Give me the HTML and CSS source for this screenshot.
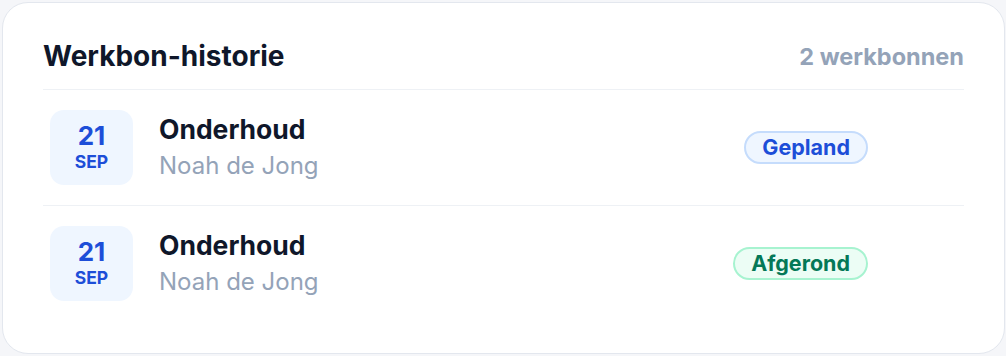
FILE: index.html
```html
<!DOCTYPE html>
<html lang="nl">
<head>
<meta charset="utf-8">
<link rel="stylesheet" href="styles.css">
</head>
<body>
<section class="card">
  <header class="card-head">
    <h2 class="title">Werkbon-historie</h2>
    <span class="count">2 werkbonnen</span>
  </header>
  <ul class="list">
    <li class="row">
      <div class="date"><span class="day">21</span><span class="month">SEP</span></div>
      <div class="info">
        <div class="kind">Onderhoud</div>
        <div class="person">Noah de Jong</div>
      </div>
      <span class="badge badge-blue">Gepland</span>
    </li>
    <li class="row">
      <div class="date"><span class="day">21</span><span class="month">SEP</span></div>
      <div class="info">
        <div class="kind">Onderhoud</div>
        <div class="person">Noah de Jong</div>
      </div>
      <span class="badge badge-green">Afgerond</span>
    </li>
  </ul>
</section>
</body>
</html>
```

FILE: styles.css
```css
* { box-sizing: border-box; }
html, body { margin: 0; padding: 0; }
body {
  background: #f5f6f9;
  font-family: Inter, "Noto Sans", sans-serif;
  padding: 2px 1px 2px 2px;
  width: 1006px;
  height: 356px;
}
.card {
  background: #ffffff;
  border: 1.5px solid #e3e7ee;
  border-radius: 26px;
  padding: 33px 40px 32px 40px;
  height: 352px;
}
.card-head {
  display: flex;
  justify-content: space-between;
  align-items: center;
  padding-bottom: 13px;
  border-bottom: 1.5px solid #eef1f5;
}
.title {
  margin: 0;
  font-size: 28px;
  font-weight: 700;
  color: #0f172a;
  line-height: 40px;
}
.count {
  font-size: 23.5px;
  font-weight: 700;
  color: #94a3b8;
}
.list { list-style: none; margin: 0; padding: 0; }
.row {
  display: grid;
  grid-template-columns: 83px 1fr auto;
  align-items: center;
  column-gap: 26px;
  padding: 20px 96px 20px 7px;
}
.row + .row { border-top: 1.5px solid #eef1f5; }
.date {
  height: 75px;
  background: #eff6ff;
  border-radius: 14px;
  display: flex;
  flex-direction: column;
  align-items: center;
  justify-content: center;
  color: #1d4ed8;
  font-weight: 700;
}
.day { font-size: 26px; line-height: 28px; }
.month { font-size: 17.5px; line-height: 24px; }
.kind {
  font-size: 26.5px;
  font-weight: 700;
  color: #0f172a;
  line-height: 34px;
}
.person {
  font-size: 24px;
  color: #94a3b8;
  line-height: 34px;
  margin-top: 3px;
}
.badge {
  font-size: 21.5px;
  font-weight: 700;
  line-height: 27px;
  padding: 1px 16px;
  border-radius: 999px;
  border: 2px solid;
}
.badge-blue { background: #eff6ff; border-color: #c5dcfc; color: #1d4ed8; }
.badge-green { background: #ecfdf5; border-color: #a7f3d0; color: #047857; }
```
